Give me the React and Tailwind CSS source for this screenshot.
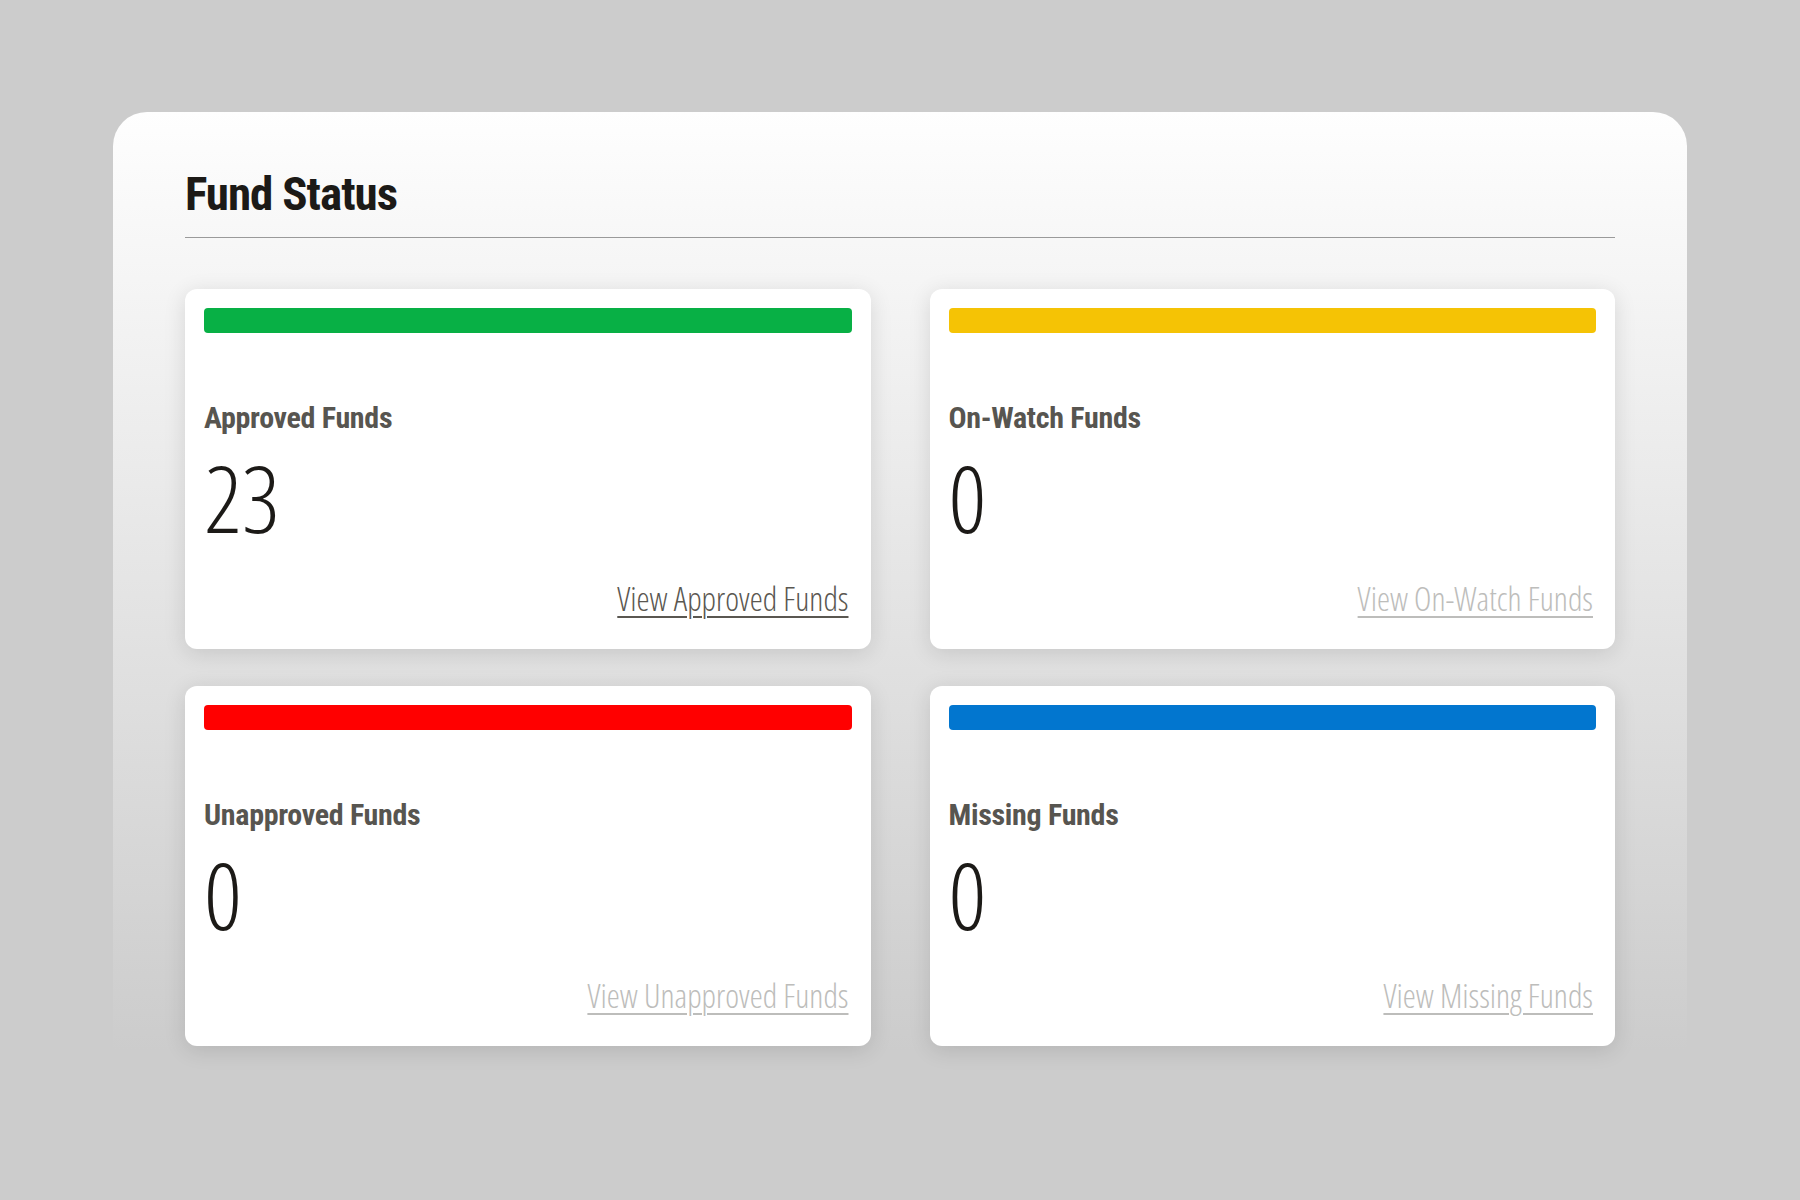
import React from 'react';

const funds = [
  { label: 'Approved Funds', count: 23, bar: 'bg-[#08b045]', link: 'View Approved Funds', active: true },
  { label: 'On-Watch Funds', count: 0, bar: 'bg-[#f5c305]', link: 'View On-Watch Funds', active: false },
  { label: 'Unapproved Funds', count: 0, bar: 'bg-[#ff0000]', link: 'View Unapproved Funds', active: false },
  { label: 'Missing Funds', count: 0, bar: 'bg-[#0276cf]', link: 'View Missing Funds', active: false },
];

function FundCard({ fund }) {
  return (
    <div className="h-[360px] rounded-[12px] bg-white px-[19px] pt-[19px] shadow-[0_4px_22px_rgba(0,0,0,0.12)] flex flex-col">
      <div className={`h-[25px] rounded-[4px] ${fund.bar}`} />
      <div className="mt-[70px] text-[30px] leading-none font-bold tracking-[-0.3px] text-[#575550]">{fund.label}</div>
      <div className="mt-[18px] font-['Open_Sans',sans-serif] [font-stretch:75%] text-[93px] leading-none font-light text-[#1c1a17]">
        {fund.count}
      </div>
      <div className="mt-[38px] flex justify-end pr-[3px]">
        <a
          href="#"
          className={`font-['Open_Sans',sans-serif] [font-stretch:75%] font-light text-[33px] leading-none underline underline-offset-[5px] decoration-[1.5px] ${
            fund.active ? 'text-[#5a5751]' : 'text-[#bdbdbb]'
          }`}
        >
          {fund.link}
        </a>
      </div>
    </div>
  );
}

export default function App() {
  return (
    <div className="min-h-screen w-full bg-[#cccccc] pt-[112px] px-[113px] font-['Roboto_Condensed','Roboto',sans-serif]">
      <div className="rounded-[34px] bg-linear-to-b from-[#fefefe] to-[#cccccc] to-90% px-[72px] pt-[58px] pb-[110px]">
        <h1 className="text-[47px] leading-none font-bold text-[#1c1a17] tracking-[-1px]">Fund Status</h1>
        <div className="mt-[20px] h-px bg-[#9a9a9a]" />
        <div className="mt-[51px] grid grid-cols-2 gap-x-[59px] gap-y-[37px]">
          {funds.map((f) => (
            <FundCard key={f.label} fund={f} />
          ))}
        </div>
      </div>
    </div>
  );
}
